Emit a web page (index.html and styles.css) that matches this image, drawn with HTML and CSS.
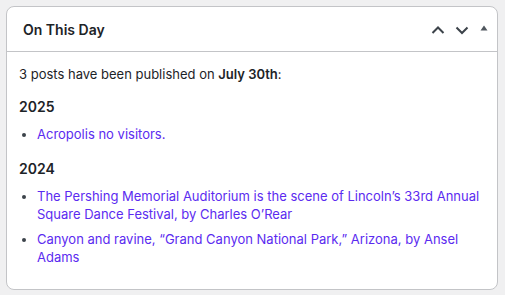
FILE: index.html
```html
<!DOCTYPE html>
<html lang="en">
<head>
  <meta charset="UTF-8" />
  <title>On This Day</title>
  <link rel="stylesheet" href="styles.css">
</head>
<body>

<div class="postbox">
  <div class="postbox-header">
    <h2>On This Day</h2>
    <div class="handle-actions">
      <button class="handle" aria-label="Move up">
        <svg width="16" height="16" viewBox="0 0 16 16"><path d="M2.5 11 L8 5.5 L13.5 11" /></svg>
      </button>
      <button class="handle" aria-label="Move down">
        <svg width="16" height="16" viewBox="0 0 16 16"><path d="M2.5 5.5 L8 11 L13.5 5.5" /></svg>
      </button>
      <button class="handle toggle" aria-label="Toggle panel">
        <svg width="10" height="10" viewBox="0 0 10 10"><polygon points="1.5,7.5 5,2.5 8.5,7.5" /></svg>
      </button>
    </div>
  </div>
  <div class="inside">
    <p>3 posts have been published on <strong>July 30th</strong>:</p>

    <h3>2025</h3>
    <ul>
      <li><a href="#">Acropolis no visitors.</a></li>
    </ul>

    <h3>2024</h3>
    <ul>
      <li><a href="#">The Pershing Memorial Auditorium is the scene of Lincoln’s 33rd Annual Square Dance Festival, by Charles O’Rear</a></li>
      <li><a href="#">Canyon and ravine, “Grand Canyon National Park,” Arizona, by Ansel Adams</a></li>
    </ul>
  </div>
</div>

</body>
</html>
```

FILE: styles.css
```css
* {
  box-sizing: border-box;
  margin: 0;
  padding: 0;
}
body {
  font-family: 'Inter', 'Liberation Sans', sans-serif;
  font-size: 13px;
  line-height: 18px;
  background: #f0f0f1;
  color: #1d2327;
  padding: 6px 7px 5px 6px;
}
.postbox {
  background: #fff;
  border: 1px solid #c3c4c7;
  border-radius: 8px;
  height: 284px;
}
.postbox-header {
  display: flex;
  align-items: center;
  justify-content: space-between;
  height: 45px;
  border-bottom: 1px solid #c3c4c7;
  padding: 0 6px 0 16px;
}
.postbox-header h2 {
  font-size: 14px;
  font-weight: 600;
  line-height: 20px;
  margin-top: 1px;
}
.handle-actions {
  display: flex;
  align-items: center;
  gap: 6px;
  margin-top: 2px;
}
.handle {
  background: none;
  border: none;
  width: 18px;
  height: 22px;
  display: flex;
  align-items: center;
  justify-content: center;
}
.handle svg path {
  fill: none;
  stroke: #3c434a;
  stroke-width: 2;
}
.handle svg polygon {
  fill: #50575e;
}
.toggle {
  width: 14px;
  margin-top: -5px;
}
.inside {
  padding: 13px 12px 0;
}
.inside p {
  margin-bottom: 15px;
}
strong {
  font-weight: 600;
}
h3 {
  font-size: 14px;
  font-weight: 600;
  line-height: 18px;
  margin-bottom: 9px;
}
ul {
  margin-left: 18px;
  margin-bottom: 17px;
}
ul li {
  margin-bottom: 7px;
}
ul li::marker {
  color: #3c434a;
}
a {
  color: #5b2bf0;
  text-decoration: none;
}
```
